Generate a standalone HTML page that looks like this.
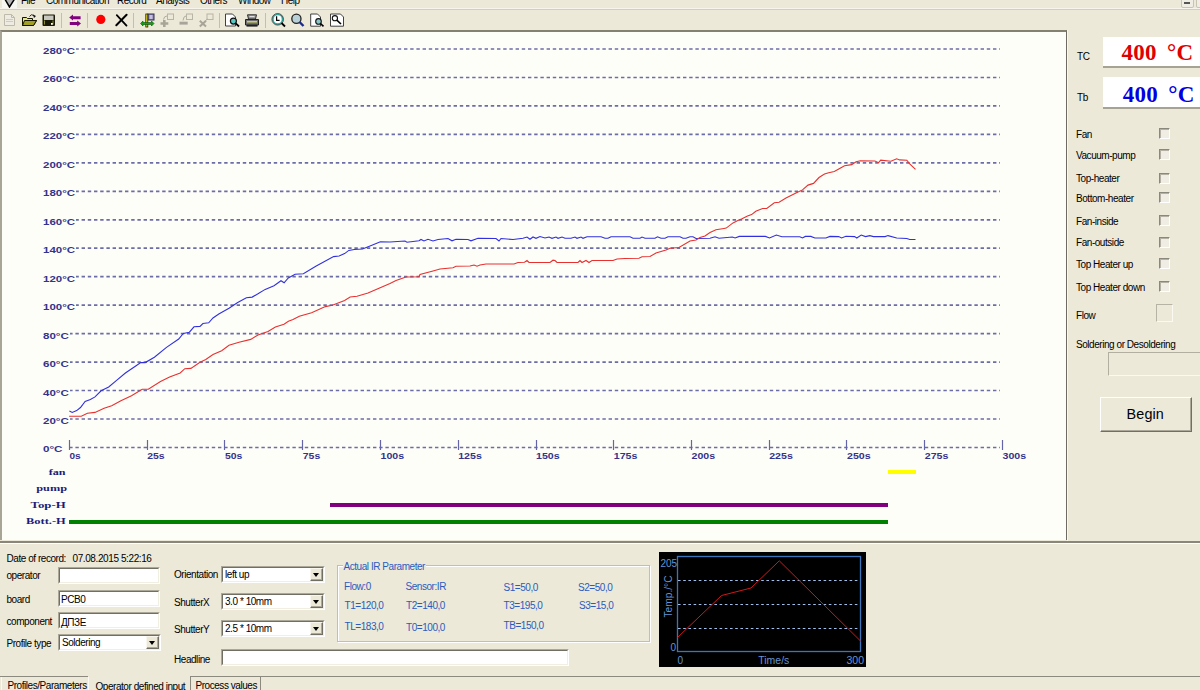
<!DOCTYPE html>
<html><head><meta charset="utf-8">
<style>
*{box-sizing:border-box}
html,body{margin:0;padding:0}
body{width:1200px;height:690px;overflow:hidden;position:relative;background:#ECE9D8;font-family:"Liberation Sans",sans-serif;font-size:10px;color:#000}
.a{position:absolute;white-space:nowrap}
.t{position:absolute;white-space:nowrap;font:10px/10px "Liberation Sans",sans-serif;letter-spacing:-0.45px;color:#000}
svg{position:absolute;left:0;top:0}
.g{stroke:#6C6CA6;stroke-width:1.7;stroke-dasharray:3.4 2.8;stroke-dashoffset:0.8}
.tk{stroke:#6464a8;stroke-width:1.2}
.yl{font:bold 9px "Liberation Sans",sans-serif;fill:#34348C}
.xl{font:bold 9.5px "Liberation Sans",sans-serif;fill:#34348C}
.bl{font:bold 9px "Liberation Serif",serif;fill:#1C1C78}
.mt{font:10px "Liberation Sans",sans-serif;fill:#6494D4}
.chart{position:absolute;left:0;top:30px;width:1067px;height:510px;background:#FEFEF8;border-top:2px solid #858170;border-left:2px solid #A8A496;border-right:1px solid #6E6C62}
.split{position:absolute;left:0;top:541px;width:1200px;height:2px;background:#8A877A}
.split2{position:absolute;left:0;top:543px;width:1200px;height:1px;background:#FFFFFF}
.menu{position:absolute;left:0;top:0;width:1200px;height:8px;overflow:hidden}
.menuline{position:absolute;left:0;top:9px;width:1200px;height:1px;background:#D2CEBE}
.menuline2{position:absolute;left:0;top:8px;width:1200px;height:1px;background:#F6F4EC}
.irp{color:#2A5CC0}
</style></head><body>
<div class="menu">
 <svg width="20" height="9" style="left:0;top:0"><rect x="2" y="0" width="15" height="8" fill="#F8F8F2"/><path d="M4 -2.5 L9.5 7 L15.5 -2.5" fill="#B4B4B4" stroke="#000" stroke-width="1.5"/></svg>
 <div class="t" style="left:21px;top:-4.5px;font-size:10px;letter-spacing:-0.5px">File</div>
 <div class="t" style="left:46px;top:-4.5px;font-size:10px;letter-spacing:-0.5px">Communication</div>
 <div class="t" style="left:117px;top:-4.5px;font-size:10px;letter-spacing:-0.5px">Record</div>
 <div class="t" style="left:156px;top:-4.5px;font-size:10px;letter-spacing:-0.5px">Analysis</div>
 <div class="t" style="left:200px;top:-4.5px;font-size:10px;letter-spacing:-0.5px">Others</div>
 <div class="t" style="left:238px;top:-4.5px;font-size:10px;letter-spacing:-0.5px">Window</div>
 <div class="t" style="left:281px;top:-4.5px;font-size:10px;letter-spacing:-0.5px">Help</div>
</div>
<div class="menuline"></div><div class="menuline2"></div>
<div class="a" style="left:61px;top:13px;width:1px;height:15px;background:#C2BFAE"></div>
<div class="a" style="left:87px;top:13px;width:1px;height:15px;background:#C2BFAE"></div>
<div class="a" style="left:133px;top:13px;width:1px;height:15px;background:#C2BFAE"></div>
<div class="a" style="left:219px;top:13px;width:1px;height:15px;background:#C2BFAE"></div>
<div class="a" style="left:265px;top:13px;width:1px;height:15px;background:#C2BFAE"></div>
<svg width="360" height="30" viewBox="0 0 360 30" style="left:0;top:0">
<!-- new doc disabled -->
<path d="M4.5 14.5 H11.5 L14.5 17.5 V25.5 H4.5 Z" fill="#EEECE2" stroke="#BDBAAC"/>
<path d="M6 19.5 H13 M6 21.5 H13" stroke="#CFCCBE" stroke-width="1"/>
<path d="M11.5 14.5 V17.5 H14.5" fill="none" stroke="#BDBAAC"/>
<!-- open folder -->
<path d="M22.5 17.5 H26.5 L27.5 18.5 H32.5 V20.5 L36.5 20.5 L33.5 25.5 H22.5 Z" fill="#E4E48C" stroke="#141400"/>
<path d="M24.5 20.5 H36.5 L33.5 25.5 H22.5 Z" fill="#A0A024" stroke="#141400"/>
<path d="M29.5 16.5 Q31 13.5 34 15.5" fill="none" stroke="#222" stroke-width="1"/>
<path d="M33 14.5 L36 16 L34 18 Z" fill="#111"/>
<!-- save -->
<rect x="42.5" y="14.5" width="12.5" height="11.5" rx="1" fill="#1A1A08"/>
<rect x="44" y="15.5" width="9.5" height="4.5" fill="#C8C8C0"/>
<rect x="44" y="20.5" width="1" height="4" fill="#8C8C30"/>
<rect x="52.5" y="20.5" width="1" height="4" fill="#8C8C30"/>
<rect x="51" y="23" width="1.8" height="1.8" fill="#fff"/>
<!-- purple arrows -->
<path d="M69.2 17.6 L73 14.6 V16.2 H80.6 V19.2 H73 V20.6 Z" fill="#800080"/>
<path d="M81 23.6 L77.2 20.6 V22.1 H69.8 V25.1 H77.2 V26.6 Z" fill="#800080"/>
<!-- red dot -->
<circle cx="100.8" cy="19.4" r="4.6" fill="#FF0000"/>
<!-- X -->
<path d="M116.3 25.3 L126.6 14.8" stroke="#000" stroke-width="2" stroke-linecap="round"/><path d="M116.8 15.2 L126.5 25.6" stroke="#000" stroke-width="1.8" stroke-linecap="round"/>
<!-- green arrows icon -->
<rect x="148" y="14" width="6" height="6" fill="#8C80B8" stroke="#303050" stroke-width="1"/>
<rect x="149.5" y="15.5" width="3" height="1" fill="#fff"/>
<rect x="149.5" y="17.5" width="3" height="1" fill="#fff"/>
<rect x="145.8" y="14" width="2" height="13" fill="#E8D820" stroke="#202000" stroke-width="0.8"/>
<path d="M140.5 23.5 L143 21 V22.5 H151.5 V21 L154 23.5 L151.5 26 V24.5 H143 V26 Z" fill="#10A010" stroke="#0A500A" stroke-width="0.6"/>
<!-- disabled plus -->
<rect x="167.5" y="14" width="6" height="5.5" fill="none" stroke="#B8B4A6"/>
<path d="M164.3 20 V27 M160.5 23.5 H168.3" stroke="#A8A498" stroke-width="2.6"/>
<path d="M163.5 19.5 Q164 16 167 16" fill="none" stroke="#B0AC9E"/>
<!-- disabled minus -->
<rect x="186.5" y="14" width="6" height="5.5" fill="none" stroke="#B8B4A6"/>
<rect x="179.5" y="21.7" width="8.2" height="2.9" fill="#A8A498"/>
<path d="M183 20.5 Q183.5 16 186 16" fill="none" stroke="#B0AC9E"/>
<!-- disabled x -->
<rect x="207" y="14" width="6" height="5.5" fill="none" stroke="#B8B4A6"/>
<path d="M199.8 20.8 L206 26.5 M206 20.8 L199.8 26.5" stroke="#A8A498" stroke-width="2"/>
<path d="M205 21 L207.5 19" stroke="#B0AC9E"/>
<!-- print preview -->
<path d="M225.5 14 H232.5 L235.5 17 V26 H225.5 Z" fill="#fff" stroke="#404040"/>
<circle cx="233.4" cy="21.1" r="3" fill="#58C8C0" stroke="#101010" stroke-width="1.2"/>
<path d="M235.5 23.2 L239 26.5" stroke="#000" stroke-width="1.8"/>
<!-- printer -->
<path d="M247.5 14.8 H256.5 L255.5 19 H248.5 Z" fill="#9C9C9C" stroke="#303030"/><rect x="249.5" y="16" width="5" height="1" fill="#E0E0E0"/>
<path d="M245.5 19.5 H258.5 V25 H245.5 Z" fill="#707070" stroke="#202020"/>
<rect x="247" y="21" width="10" height="1.5" fill="#C8D060"/>
<rect x="246.5" y="25" width="11" height="1.6" fill="#202020"/>
<!-- zoom clock -->
<circle cx="277.7" cy="19.3" r="4.8" fill="#fff" stroke="#2AAAA0" stroke-width="1.6"/>
<circle cx="277.7" cy="19.3" r="5.8" fill="none" stroke="#202020" stroke-width="0.7"/>
<path d="M276.6 16.3 V20.3 H279.6" fill="none" stroke="#000" stroke-width="1.2"/>
<path d="M281.5 23 L285 26.5" stroke="#000" stroke-width="1.8"/>
<!-- magnifier -->
<circle cx="296.4" cy="18.75" r="4.6" fill="#B8D0D8" stroke="#202020" stroke-width="1.3"/>
<path d="M299.5 22 L303.5 26" stroke="#1A2A90" stroke-width="2.4"/>
<!-- page zoom -->
<path d="M310.7 14 H317.5 L320.5 17 V26.2 H310.7 Z" fill="#fff" stroke="#404040"/>
<circle cx="318.5" cy="21.4" r="2.8" fill="#88C8C8" stroke="#101010" stroke-width="1.1"/>
<path d="M320.5 23.5 L323.5 26.3" stroke="#000" stroke-width="1.6"/>
<!-- page magnifier -->
<path d="M330.5 14 H340.5 L343.5 17 V26.2 H330.5 Z" fill="#fff" stroke="#404040"/>
<circle cx="334.9" cy="18.2" r="2.6" fill="#fff" stroke="#101010" stroke-width="1.1"/>
<path d="M336.8 20.2 L341 24" stroke="#000" stroke-width="1.6"/>
</svg>
<div class="chart"></div>
<div class="split"></div><div class="split2"></div>
<div class="a" style="left:1067px;top:30px;width:1px;height:511px;background:#F8F7F0"></div>
<svg width="1200" height="690" viewBox="0 0 1200 690">
<line x1="70" y1="49.0" x2="1000" y2="49.0" class="g"/>
<rect x="42" y="46" width="34" height="9" fill="#FEFEF8"/>
<text x="43" y="54" class="yl" textLength="32" lengthAdjust="spacingAndGlyphs">280°C</text>
<line x1="70" y1="77.5" x2="1000" y2="77.5" class="g"/>
<rect x="42" y="74" width="34" height="9" fill="#FEFEF8"/>
<text x="43" y="82" class="yl" textLength="32" lengthAdjust="spacingAndGlyphs">260°C</text>
<line x1="70" y1="105.9" x2="1000" y2="105.9" class="g"/>
<rect x="42" y="103" width="34" height="9" fill="#FEFEF8"/>
<text x="43" y="111" class="yl" textLength="32" lengthAdjust="spacingAndGlyphs">240°C</text>
<line x1="70" y1="134.4" x2="1000" y2="134.4" class="g"/>
<rect x="42" y="131" width="34" height="9" fill="#FEFEF8"/>
<text x="43" y="139" class="yl" textLength="32" lengthAdjust="spacingAndGlyphs">220°C</text>
<line x1="70" y1="162.8" x2="1000" y2="162.8" class="g"/>
<rect x="42" y="160" width="34" height="9" fill="#FEFEF8"/>
<text x="43" y="168" class="yl" textLength="32" lengthAdjust="spacingAndGlyphs">200°C</text>
<line x1="70" y1="191.3" x2="1000" y2="191.3" class="g"/>
<rect x="42" y="188" width="34" height="9" fill="#FEFEF8"/>
<text x="43" y="196" class="yl" textLength="32" lengthAdjust="spacingAndGlyphs">180°C</text>
<line x1="70" y1="219.8" x2="1000" y2="219.8" class="g"/>
<rect x="42" y="217" width="34" height="9" fill="#FEFEF8"/>
<text x="43" y="225" class="yl" textLength="32" lengthAdjust="spacingAndGlyphs">160°C</text>
<line x1="70" y1="248.2" x2="1000" y2="248.2" class="g"/>
<rect x="42" y="245" width="34" height="9" fill="#FEFEF8"/>
<text x="43" y="253" class="yl" textLength="32" lengthAdjust="spacingAndGlyphs">140°C</text>
<line x1="70" y1="276.7" x2="1000" y2="276.7" class="g"/>
<rect x="42" y="274" width="34" height="9" fill="#FEFEF8"/>
<text x="43" y="282" class="yl" textLength="32" lengthAdjust="spacingAndGlyphs">120°C</text>
<line x1="70" y1="305.2" x2="1000" y2="305.2" class="g"/>
<rect x="42" y="302" width="34" height="9" fill="#FEFEF8"/>
<text x="43" y="310" class="yl" textLength="32" lengthAdjust="spacingAndGlyphs">100°C</text>
<line x1="70" y1="333.6" x2="1000" y2="333.6" class="g"/>
<rect x="42" y="331" width="27.8" height="9" fill="#FEFEF8"/>
<text x="43" y="339" class="yl" textLength="25.8" lengthAdjust="spacingAndGlyphs">80°C</text>
<line x1="70" y1="362.1" x2="1000" y2="362.1" class="g"/>
<rect x="42" y="359" width="27.8" height="9" fill="#FEFEF8"/>
<text x="43" y="367" class="yl" textLength="25.8" lengthAdjust="spacingAndGlyphs">60°C</text>
<line x1="70" y1="390.5" x2="1000" y2="390.5" class="g"/>
<rect x="42" y="388" width="27.8" height="9" fill="#FEFEF8"/>
<text x="43" y="396" class="yl" textLength="25.8" lengthAdjust="spacingAndGlyphs">40°C</text>
<line x1="70" y1="419.0" x2="1000" y2="419.0" class="g"/>
<rect x="42" y="416" width="27.8" height="9" fill="#FEFEF8"/>
<text x="43" y="424" class="yl" textLength="25.8" lengthAdjust="spacingAndGlyphs">20°C</text>
<line x1="70" y1="447.5" x2="1000" y2="447.5" class="g"/>
<rect x="42" y="444" width="21.5" height="9" fill="#FEFEF8"/>
<text x="43" y="452" class="yl" textLength="19.5" lengthAdjust="spacingAndGlyphs">0°C</text>
<line x1="69.5" y1="440" x2="69.5" y2="450" class="tk"/>
<text x="69.5" y="458.8" class="xl" textLength="11.2" lengthAdjust="spacingAndGlyphs">0s</text>
<line x1="147.5" y1="440" x2="147.5" y2="450" class="tk"/>
<text x="147.2" y="458.8" class="xl" textLength="17.4" lengthAdjust="spacingAndGlyphs">25s</text>
<line x1="224.5" y1="440" x2="224.5" y2="450" class="tk"/>
<text x="225.0" y="458.8" class="xl" textLength="17.4" lengthAdjust="spacingAndGlyphs">50s</text>
<line x1="302.5" y1="440" x2="302.5" y2="450" class="tk"/>
<text x="302.8" y="458.8" class="xl" textLength="17.4" lengthAdjust="spacingAndGlyphs">75s</text>
<line x1="380.5" y1="440" x2="380.5" y2="450" class="tk"/>
<text x="380.5" y="458.8" class="xl" textLength="23.6" lengthAdjust="spacingAndGlyphs">100s</text>
<line x1="458.5" y1="440" x2="458.5" y2="450" class="tk"/>
<text x="458.2" y="458.8" class="xl" textLength="23.6" lengthAdjust="spacingAndGlyphs">125s</text>
<line x1="536.5" y1="440" x2="536.5" y2="450" class="tk"/>
<text x="536.0" y="458.8" class="xl" textLength="23.6" lengthAdjust="spacingAndGlyphs">150s</text>
<line x1="613.5" y1="440" x2="613.5" y2="450" class="tk"/>
<text x="613.8" y="458.8" class="xl" textLength="23.6" lengthAdjust="spacingAndGlyphs">175s</text>
<line x1="691.5" y1="440" x2="691.5" y2="450" class="tk"/>
<text x="691.5" y="458.8" class="xl" textLength="23.6" lengthAdjust="spacingAndGlyphs">200s</text>
<line x1="769.5" y1="440" x2="769.5" y2="450" class="tk"/>
<text x="769.2" y="458.8" class="xl" textLength="23.6" lengthAdjust="spacingAndGlyphs">225s</text>
<line x1="846.5" y1="440" x2="846.5" y2="450" class="tk"/>
<text x="847.0" y="458.8" class="xl" textLength="23.6" lengthAdjust="spacingAndGlyphs">250s</text>
<line x1="924.5" y1="440" x2="924.5" y2="450" class="tk"/>
<text x="924.8" y="458.8" class="xl" textLength="23.6" lengthAdjust="spacingAndGlyphs">275s</text>
<line x1="1002.5" y1="440" x2="1002.5" y2="450" class="tk"/>
<text x="1002.5" y="458.8" class="xl" textLength="23.6" lengthAdjust="spacingAndGlyphs">300s</text>
<polyline points="69.4,411 72.2,412.4 76.7,410.6 80.5,407.5 85.1,401.4 90.4,399.5 95,396.9 101.1,390.8 108.7,387 116.3,380.6 125.4,373 136.1,365.7 140.7,362.6 145.2,362.6 154.4,357.3 166.5,347.4 178.7,339 183.3,333.4 189.4,332.2 194,326.8 200,326.4 202.9,323.5 208.7,322.8 213,318 218.8,314 229,308.3 237.7,302.5 246.4,297.8 252.2,297.1 258,293.8 265.2,289.4 274,285.8 281,280.7 284.1,282.8 288.3,278 295.1,274.2 303.4,273.8 315.8,266.3 333.6,256.6 339.1,256 344.6,253.6 348.8,250.4 354.3,249.5 362.5,249 369.4,246.3 380.4,241.8 390,242 405,241 407,242.2 419,240.8 421,239.5 424,241 428,239.3 433,241 438,239.5 448,238.5 452,240.8 456,239.3 468,239.5 471,240.8 478,238.3 496,238.5 499,241 501,238.5 513,239.5 523,238.3 527,237 530,239.3 533,237 536,238.3 540,236.5 545,238 549,237 552,238.3 556,237 558,238.3 562,237 565,238.3 571,238.3 575,237 577,238.3 581,237 583,238.3 587,236.7 601,236.7 605,238.3 608,238.3 611,236.7 630,236.8 633,238.3 640,238.3 642,237 645,238.3 655,238.3 657.5,236.8 661,238.3 665,238.3 668,236.8 680,236.8 683,238.3 686,238.3 690,236.8 693,236.8 696,238.5 710,238.3 715,236.8 719,238.3 732.4,237 735.1,238 739.3,236.4 765.4,236.4 769.5,238 776.4,235 781.9,236.7 799.8,236.7 802.5,238 805.3,236.4 810.8,236.4 814.9,238 825.9,238 830,236.4 838.7,236.6 841.6,238 845.9,236.3 854.6,236.6 856.8,238 861.2,235.1 865.5,236.6 869.9,235.6 873.5,236.6 885.1,236.6 888,235.6 896.7,238 906.8,238.5 909.7,239.5 915.5,239.5" fill="none" stroke="#3030e0" stroke-width="1.1"/>
<polyline points="69.1,416.2 81.3,416.2 87.4,413.3 95,412.4 104.1,408.3 111.7,405.7 120.9,400.7 131.5,395.8 142.2,389.3 148.3,389.3 160.5,381.6 169.6,377 180.2,373 184.8,368.7 190.9,368.4 200,362.3 205.8,359.4 213,354.6 221.7,350.7 229,345.2 239,342.3 250.7,339.4 258,335 268,331.4 275.4,327 284,324.2 288.4,321.3 293,319.6 299.3,316.2 311.6,312.8 325.4,306.6 332.3,305.2 344.6,300.4 350.1,297 357,296.3 368,293.1 379,288.3 390,283.5 396,280.5 406,277 419,276.8 420,274.5 433,271 440,269 453,267.8 456,266.3 470,266 474,265 477,266.2 480,265 486,264 514,264 518,262.5 524.5,262.2 527,260.5 529,262.5 550,262.5 553,260.2 555,260.5 557,262.5 578,262.5 580,260.5 582,262.5 586,260.5 589,262.5 592,260.5 613,260.5 617,259 625,258.5 639,258.2 642,256.8 650,256.5 656,253 666,250 670,248.2 679,247.5 690,241 696,240 700,237.5 705,236 710,232.5 716,229.8 724,228.5 726.2,228.1 733,222.9 737.9,220.6 742,218.8 747.5,216 751.6,214.6 755.8,211.2 762.6,208.5 766.8,208.5 774.3,202.7 779.1,202.3 786,198.1 797,192.6 802.5,189.9 808,185.1 813.5,183.4 819,177.5 824.5,174 828.7,172.7 834.3,171.5 840.1,168.2 844.5,165.7 851.7,164.6 856.1,161.7 860.4,160.7 874.9,161 878.6,162.7 880.7,160.2 890.9,161.2 896.7,158.8 899.6,159.9 906.8,160.2 909.7,163.8 915.5,169.3" fill="none" stroke="#e83030" stroke-width="1.1"/>
<rect x="888" y="470" width="28" height="4" fill="#ffff00"/>
<rect x="330" y="503" width="558" height="4" fill="#800080"/>
<rect x="69" y="520" width="819" height="4" fill="#008000"/>
<text x="48.8" y="474.8" class="bl" textLength="16.8" lengthAdjust="spacingAndGlyphs">fan</text>
<text x="36.3" y="491.3" class="bl" textLength="30.7" lengthAdjust="spacingAndGlyphs">pump</text>
<text x="30.6" y="508.2" class="bl" textLength="35.1" lengthAdjust="spacingAndGlyphs">Top-H</text>
<text x="26" y="524.2" class="bl" textLength="39.7" lengthAdjust="spacingAndGlyphs">Bott.-H</text>
<rect x="659" y="552" width="207" height="115" fill="#000"/>
<rect x="677.5" y="556.5" width="183" height="95" fill="none" stroke="#3C74BC" stroke-width="1.3"/>
<line x1="678" y1="580.5" x2="860" y2="580.5" stroke="#9CC0EC" stroke-width="1" stroke-dasharray="2.6 2.6"/>
<line x1="678" y1="604.5" x2="860" y2="604.5" stroke="#9CC0EC" stroke-width="1" stroke-dasharray="2.6 2.6"/>
<line x1="678" y1="628.5" x2="860" y2="628.5" stroke="#9CC0EC" stroke-width="1" stroke-dasharray="2.6 2.6"/>
<polyline points="677.5,637.5 721.5,595.5 751,588 779.3,560.8 860.8,641.3" fill="none" stroke="#d01818" stroke-width="1"/>
<text x="660.5" y="567" class="mt">205</text>
<text x="670.5" y="651" class="mt">0</text>
<text x="677.5" y="663.8" class="mt">0</text>
<text x="758.3" y="664" class="mt" textLength="31" lengthAdjust="spacingAndGlyphs">Time/s</text>
<text x="846.5" y="664" class="mt" textLength="17.6" lengthAdjust="spacingAndGlyphs">300</text>
<text transform="translate(672.3,617.5) rotate(-90)" class="mt" textLength="42" lengthAdjust="spacingAndGlyphs">Temp./°C</text>
</svg>
<div class="t" style="left:1077px;top:52.3px;">TC</div><div class="a" style="left:1103px;top:37px;width:97px;height:31px;background:#fff;border-bottom:2px solid #A6A394"></div><div class="a" style="left:1121.5px;top:40.3px;font:bold 23px/26px 'Liberation Serif',serif;color:#E00000;word-spacing:4.5px;letter-spacing:0.2px">400 °C</div><div class="t" style="left:1077px;top:92.8px;">Tb</div><div class="a" style="left:1103px;top:77px;width:97px;height:32px;background:#fff;border-bottom:2px solid #A6A394"></div><div class="a" style="left:1122.8px;top:81.5px;font:bold 23px/26px 'Liberation Serif',serif;color:#0000E0;word-spacing:4.5px;letter-spacing:0.2px">400 °C</div><div class="t" style="left:1076px;top:129.8px;">Fan</div><div class="a" style="left:1159px;top:128px;width:11px;height:11px;background:#F0EEE4;border-top:1px solid #8A887C;border-left:1px solid #8A887C;border-right:1px solid #fff;border-bottom:1px solid #fff;box-shadow:inset 1px 1px 0 #B4B1A4"></div><div class="t" style="left:1076px;top:151.3px;">Vacuum-pump</div><div class="a" style="left:1159px;top:149px;width:11px;height:11px;background:#F0EEE4;border-top:1px solid #8A887C;border-left:1px solid #8A887C;border-right:1px solid #fff;border-bottom:1px solid #fff;box-shadow:inset 1px 1px 0 #B4B1A4"></div><div class="t" style="left:1076px;top:174.3px;">Top-heater</div><div class="a" style="left:1159px;top:173px;width:11px;height:11px;background:#F0EEE4;border-top:1px solid #8A887C;border-left:1px solid #8A887C;border-right:1px solid #fff;border-bottom:1px solid #fff;box-shadow:inset 1px 1px 0 #B4B1A4"></div><div class="t" style="left:1076px;top:193.8px;">Bottom-heater</div><div class="a" style="left:1159px;top:192px;width:11px;height:11px;background:#F0EEE4;border-top:1px solid #8A887C;border-left:1px solid #8A887C;border-right:1px solid #fff;border-bottom:1px solid #fff;box-shadow:inset 1px 1px 0 #B4B1A4"></div><div class="t" style="left:1076px;top:216.8px;">Fan-inside</div><div class="a" style="left:1159px;top:215px;width:11px;height:11px;background:#F0EEE4;border-top:1px solid #8A887C;border-left:1px solid #8A887C;border-right:1px solid #fff;border-bottom:1px solid #fff;box-shadow:inset 1px 1px 0 #B4B1A4"></div><div class="t" style="left:1076px;top:238.3px;">Fan-outside</div><div class="a" style="left:1159px;top:237px;width:11px;height:11px;background:#F0EEE4;border-top:1px solid #8A887C;border-left:1px solid #8A887C;border-right:1px solid #fff;border-bottom:1px solid #fff;box-shadow:inset 1px 1px 0 #B4B1A4"></div><div class="t" style="left:1076px;top:260.3px;">Top Heater up</div><div class="a" style="left:1159px;top:258px;width:11px;height:11px;background:#F0EEE4;border-top:1px solid #8A887C;border-left:1px solid #8A887C;border-right:1px solid #fff;border-bottom:1px solid #fff;box-shadow:inset 1px 1px 0 #B4B1A4"></div><div class="t" style="left:1076px;top:282.8px;">Top Heater down</div><div class="a" style="left:1159px;top:281px;width:11px;height:11px;background:#F0EEE4;border-top:1px solid #8A887C;border-left:1px solid #8A887C;border-right:1px solid #fff;border-bottom:1px solid #fff;box-shadow:inset 1px 1px 0 #B4B1A4"></div><div class="t" style="left:1076px;top:310.8px;">Flow</div><div class="a" style="left:1156px;top:304px;width:17px;height:18px;border-top:1px solid #B6B3A4;border-left:1px solid #B6B3A4;border-right:1px solid #FAF9F2;border-bottom:1px solid #FAF9F2"></div><div class="t" style="left:1076px;top:340.3px;">Soldering or Desoldering</div><div class="a" style="left:1108px;top:352px;width:100px;height:24px;border-top:1px solid #B2AFA0;border-left:1px solid #B2AFA0;border-bottom:1px solid #FAF9F2"></div><div class="a" style="left:1100px;top:397px;width:92px;height:35px;border-top:1px solid #fff;border-left:1px solid #fff;border-right:1px solid #716F64;border-bottom:1px solid #716F64;box-shadow:inset -1px -1px 0 #ACA899"></div><div class="a" style="left:1126.6px;top:405.8px;font:14.4px/16px 'Liberation Sans',sans-serif;letter-spacing:0.1px">Begin</div><div class="t" style="left:6.5px;top:554.3px;">Date of record:</div><div class="t" style="left:72.5px;top:554.3px;letter-spacing:-0.4px">07.08.2015 5:22:16</div><div class="t" style="left:6.5px;top:571.1px;">operator</div><div class="a" style="left:58px;top:567px;width:102px;height:17px;background:#fff;border-top:1px solid #ACA899;border-left:1px solid #ACA899;border-right:1px solid #fff;border-bottom:1px solid #fff"><div style="position:absolute;left:0;top:0;right:0;bottom:0;border-top:1px solid #716F64;border-left:1px solid #716F64;border-right:1px solid #F1EFE2;border-bottom:1px solid #F1EFE2"></div></div><div class="t" style="left:6.5px;top:595.3px;">board</div><div class="a" style="left:58px;top:590px;width:102px;height:17px;background:#fff;border-top:1px solid #ACA899;border-left:1px solid #ACA899;border-right:1px solid #fff;border-bottom:1px solid #fff"><div style="position:absolute;left:0;top:0;right:0;bottom:0;border-top:1px solid #716F64;border-left:1px solid #716F64;border-right:1px solid #F1EFE2;border-bottom:1px solid #F1EFE2"></div></div><div class="t" style="left:61px;top:594.7px;">PCB0</div><div class="t" style="left:6.5px;top:616.9px;">component</div><div class="a" style="left:58px;top:612px;width:102px;height:17px;background:#fff;border-top:1px solid #ACA899;border-left:1px solid #ACA899;border-right:1px solid #fff;border-bottom:1px solid #fff"><div style="position:absolute;left:0;top:0;right:0;bottom:0;border-top:1px solid #716F64;border-left:1px solid #716F64;border-right:1px solid #F1EFE2;border-bottom:1px solid #F1EFE2"></div></div><div class="t" style="left:61px;top:617.8px;">ДПЗЕ</div><div class="t" style="left:6.5px;top:638.9px;">Profile type</div><div class="a" style="left:58px;top:634px;width:103px;height:17px;background:#fff;border-top:1px solid #ACA899;border-left:1px solid #ACA899;border-right:1px solid #fff;border-bottom:1px solid #fff"><div style="position:absolute;left:0;top:0;right:0;bottom:0;border-top:1px solid #716F64;border-left:1px solid #716F64;border-right:1px solid #F1EFE2;border-bottom:1px solid #F1EFE2"></div></div><div class="a" style="left:146px;top:636px;width:13px;height:13px;background:#ECE9D8;border-top:1px solid #F8F6EE;border-left:1px solid #F8F6EE;border-right:1px solid #716F64;border-bottom:1px solid #716F64;box-shadow:inset -1px -1px 0 #ACA899"></div><div class="a" style="left:149px;top:641px;width:0;height:0;border-left:3.5px solid transparent;border-right:3.5px solid transparent;border-top:4px solid #000"></div><div class="t" style="left:62px;top:638.3px;">Soldering</div><div class="t" style="left:174px;top:569.8px;">Orientation</div><div class="a" style="left:221px;top:566px;width:104px;height:17px;background:#fff;border-top:1px solid #ACA899;border-left:1px solid #ACA899;border-right:1px solid #fff;border-bottom:1px solid #fff"><div style="position:absolute;left:0;top:0;right:0;bottom:0;border-top:1px solid #716F64;border-left:1px solid #716F64;border-right:1px solid #F1EFE2;border-bottom:1px solid #F1EFE2"></div></div><div class="a" style="left:310px;top:568px;width:13px;height:13px;background:#ECE9D8;border-top:1px solid #F8F6EE;border-left:1px solid #F8F6EE;border-right:1px solid #716F64;border-bottom:1px solid #716F64;box-shadow:inset -1px -1px 0 #ACA899"></div><div class="a" style="left:313px;top:573px;width:0;height:0;border-left:3.5px solid transparent;border-right:3.5px solid transparent;border-top:4px solid #000"></div><div class="t" style="left:225px;top:570.3px;">left up</div><div class="t" style="left:174px;top:597.8px;">ShutterX</div><div class="a" style="left:221px;top:593px;width:104px;height:17px;background:#fff;border-top:1px solid #ACA899;border-left:1px solid #ACA899;border-right:1px solid #fff;border-bottom:1px solid #fff"><div style="position:absolute;left:0;top:0;right:0;bottom:0;border-top:1px solid #716F64;border-left:1px solid #716F64;border-right:1px solid #F1EFE2;border-bottom:1px solid #F1EFE2"></div></div><div class="a" style="left:310px;top:595px;width:13px;height:13px;background:#ECE9D8;border-top:1px solid #F8F6EE;border-left:1px solid #F8F6EE;border-right:1px solid #716F64;border-bottom:1px solid #716F64;box-shadow:inset -1px -1px 0 #ACA899"></div><div class="a" style="left:313px;top:600px;width:0;height:0;border-left:3.5px solid transparent;border-right:3.5px solid transparent;border-top:4px solid #000"></div><div class="t" style="left:225px;top:597.3px;">3.0 * 10mm</div><div class="t" style="left:174px;top:625.3px;">ShutterY</div><div class="a" style="left:221px;top:620px;width:104px;height:17px;background:#fff;border-top:1px solid #ACA899;border-left:1px solid #ACA899;border-right:1px solid #fff;border-bottom:1px solid #fff"><div style="position:absolute;left:0;top:0;right:0;bottom:0;border-top:1px solid #716F64;border-left:1px solid #716F64;border-right:1px solid #F1EFE2;border-bottom:1px solid #F1EFE2"></div></div><div class="a" style="left:310px;top:622px;width:13px;height:13px;background:#ECE9D8;border-top:1px solid #F8F6EE;border-left:1px solid #F8F6EE;border-right:1px solid #716F64;border-bottom:1px solid #716F64;box-shadow:inset -1px -1px 0 #ACA899"></div><div class="a" style="left:313px;top:627px;width:0;height:0;border-left:3.5px solid transparent;border-right:3.5px solid transparent;border-top:4px solid #000"></div><div class="t" style="left:225px;top:624.3px;">2.5 * 10mm</div><div class="t" style="left:174px;top:655.3px;">Headline</div><div class="a" style="left:221px;top:649px;width:348px;height:17px;background:#fff;border-top:1px solid #ACA899;border-left:1px solid #ACA899;border-right:1px solid #fff;border-bottom:1px solid #fff"><div style="position:absolute;left:0;top:0;right:0;bottom:0;border-top:1px solid #716F64;border-left:1px solid #716F64;border-right:1px solid #F1EFE2;border-bottom:1px solid #F1EFE2"></div></div><div class="a" style="left:337px;top:565px;width:313px;height:77px;border:1px solid #C2BFAF;box-shadow:inset 1px 1px 0 #fff, 1px 1px 0 #fff"></div><div class="t irp" style="left:342.5px;top:562.2px;background:#ECE9D8;padding:0 1px">Actual IR Parameter</div><div class="t irp" style="left:344px;top:581.7px">Flow:0</div><div class="t irp" style="left:405.5px;top:582.1px">Sensor:IR</div><div class="t irp" style="left:503.5px;top:582.8px">S1=50,0</div><div class="t irp" style="left:578px;top:582.8px">S2=50,0</div><div class="t irp" style="left:344.5px;top:601.3px">T1=120,0</div><div class="t irp" style="left:406px;top:601.4px">T2=140,0</div><div class="t irp" style="left:503.5px;top:600.8px">T3=195,0</div><div class="t irp" style="left:579px;top:600.8px">S3=15,0</div><div class="t irp" style="left:344.5px;top:622.3px">TL=183,0</div><div class="t irp" style="left:406px;top:622.8px">T0=100,0</div><div class="t irp" style="left:503.5px;top:621.3px">TB=150,0</div><div class="a" style="left:0;top:676px;width:88px;height:1px;background:#8C8A7E"></div><div class="a" style="left:88px;top:677px;width:1px;height:13px;background:#FAF9F2"></div><div class="a" style="left:1px;top:677px;width:1px;height:13px;background:#FAF9F2"></div><div class="a" style="left:190px;top:676px;width:1010px;height:1px;background:#8C8A7E"></div><div class="a" style="left:190px;top:676px;width:1px;height:14px;background:#8C8A7E"></div><div class="a" style="left:260px;top:676px;width:1px;height:14px;background:#8C8A7E"></div><div class="t" style="left:7.5px;top:680.8px;">Profiles/Parameters</div><div class="t" style="left:95.5px;top:682.3px;">Operator defined input</div><div class="t" style="left:195.5px;top:680.8px;">Process values</div><div class="a" style="left:1181px;top:-4px;width:13px;height:12px;border:1px solid #C8C4B4;border-radius:2px;background:#F0EEE4"></div><div class="a" style="left:1184px;top:2px;width:6px;height:1.5px;background:#555"></div><div class="a" style="left:1196px;top:-4px;width:13px;height:12px;border:1px solid #C8C4B4;border-radius:2px;background:#F0EEE4"></div>
</body></html>
